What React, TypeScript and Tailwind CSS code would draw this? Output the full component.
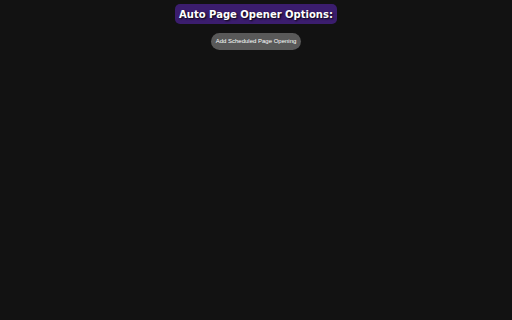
export default function App() {
  return (
    <div className="min-h-[320px] w-full bg-[#121212] flex flex-col items-center font-['Liberation_Sans',Arial,sans-serif]">
      <h1 className="mt-[4px] h-[20px] px-[4px] flex items-center rounded-[5px] bg-[#3b1d6e] text-white font-bold text-[10px] font-['DejaVu_Sans',Verdana,sans-serif] [text-shadow:1px_1px_2px_#000]">
        Auto Page Opener Options:
      </h1>
      <button className="mt-[9px] h-[17px] px-[5px] rounded-full bg-[#595959] text-white text-[6px] whitespace-nowrap flex items-center justify-center">
        Add Scheduled Page Opening
      </button>
    </div>
  );
}
